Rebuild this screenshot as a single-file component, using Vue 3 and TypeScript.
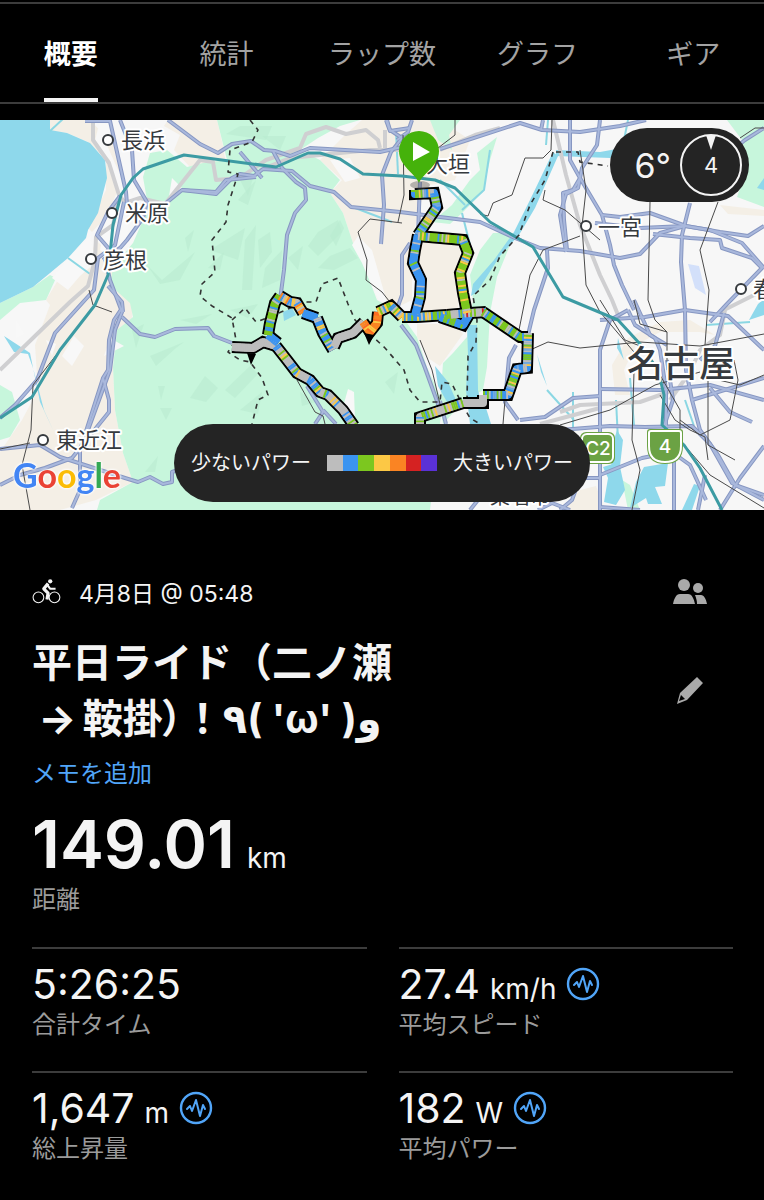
<script setup lang="ts">
import { ref } from 'vue'

type Pt = [number, number]
interface RouteSection {
  points: string
  colors: string[]
}

const tabs = ['概要', '統計', 'ラップ数', 'グラフ', 'ギア']
const activeTab = ref(0)

const GRAY = '#bdbdbd'
const BLUE = '#3b94f0'
const GREEN = '#7cc71f'
const YELLOW = '#fcc845'
const ORANGE = '#fa8423'
const RED = '#d52222'
const PURPLE = '#5a31d6'
const scale = [GRAY, BLUE, GREEN, YELLOW, ORANGE, RED, PURPLE]

const stats = [
  { value: '5:26:25', unit: '', label: '合計タイム', graph: false },
  { value: '27.4', unit: 'km/h', label: '平均スピード', graph: true },
  { value: '1,647', unit: 'm', label: '総上昇量', graph: true },
  { value: '182', unit: 'W', label: '平均パワー', graph: true },
]

const green = [
  '143,177 150,153 167,150 187,167 203,163 227,160 217,120 360,120 340,126 318,138 300,150 320,160 340,180 330,193 343,213 353,243 363,263 377,300 400,313 417,337 427,367 443,403 440,423 430,510 97,510 100,500 133,482 123,453 115,410 113,367 117,330 133,317 130,303 110,285 113,267 133,243 143,220 147,200',
  '0,303 33,287 50,275 56,278 46,300 20,303 0,320',
  '0,385 12,392 20,420 10,437 0,440',
  '430,120 438,140 452,150 449,135 460,120',
  '477,153 497,137 490,160 483,192 462,213 450,224 432,222 452,205 470,180 480,170',
  '493,233 515,233 508,250 497,277 490,313 487,367 483,390 463,402 443,424 440,405 443,363 453,353 467,337 473,300 470,275 480,250',
  '727,120 764,120 764,207 737,197 748,165 742,140',
  '622,480 628,510 640,510 630,485',
]
const beige = [
  '50,120 90,120 118,150 120,190 108,215 92,232 88,228 106,190 106,160 88,142 67,133 50,131',
  '96,240 118,262 110,285 133,305 132,318 116,332 113,367 115,410 123,453 133,482 96,500 60,510 0,510 0,452 22,420 38,390 35,345 50,305 46,300 58,280 88,262',
  '168,120 216,120 226,162 190,167 174,150 180,135 164,126',
  '200,120 217,120 224,150 200,160',
  '362,120 440,120 470,140 455,180 430,185 420,205 412,240 412,300 392,310 378,300 363,263 353,243 343,213 330,193 342,180 320,160 345,135',
  '422,240 460,245 462,270 458,308 424,312 415,280',
  '417,324 455,324 463,334 450,352 440,366 428,358 417,337',
  '615,395 612,365 628,338 660,322 690,320 715,335 700,332 660,332 636,345 624,370 630,395',
  '580,490 596,486 605,510 560,510',
  '720,205 764,210 764,216 728,214',
]
const pale = [
  '100,120 112,122 106,143 118,170 132,196 127,240 115,262 100,250 107,215 118,190 110,160 94,145',
  '68,258 90,236 96,262 80,276 68,290 52,278',
  '172,178 182,188 168,202', '74,336 84,346 72,366 62,356', '110,338 124,346 104,356', '16,320 24,334 16,338', '46,340 56,344 52,356',
  '352,245 362,263 378,300 388,306 372,250 358,236', '330,160 350,158 360,178 345,182',
  '348,389 354,392 355,420 341,414', '345,405 352,390 352,410',
]
const water = [
  '0,120 50,120 50,130 67,133 90,143 105,160 107,178 102,197 98,213 88,230 86,238 68,258 50,273 33,287 0,303',
  '4,336 24,349 30,353 40,402 54,432 44,410 33,368 28,354 14,352',
  '553,152 558,156 535,208 519,235 500,256 477,292 471,296 473,284 494,260 514,232 530,200',
  '467,325 477,325 478,390 486,424 470,424 466,390 468,355',
  '435,366 448,382 456,400 447,402 438,386', '476,396 486,408 491,424 480,424',
  '603,467 619,462 625,490 616,505 604,502 608,478', '617,430 623,440 620,466 612,480 611,450',
  '644,467 668,463 665,486 655,487 662,504 648,504 646,498 630,508 636,482', '694,484 700,486 692,510 682,510',
  '749,320 758,304 764,299 764,315', '618,338 624,360 617,348', '556,150 600,152 622,148 610,158 556,156',
  '757,188 764,178 764,190', '537,354 547,386 541,372', '283,312 292,308 296,315 284,321',
]
const shades = [
  '210,250 245,228 238,260', '245,240 256,225 252,290 242,290', '224,252 208,268 220,270', '238,200 256,180 248,205',
  '147,265 162,280 195,252 180,280 160,284', '185,238 194,230 188,252', '205,376 218,388 206,402 190,398', '158,386 165,386 161,400',
  '160,408 172,408 166,420', '145,472 158,456 155,472', '258,240 270,232 272,252 260,268', '265,268 282,250 280,280 262,288',
  '288,258 303,246 298,270', '308,246 318,232 338,220 342,232 318,256', '330,236 340,220 344,228 336,246', '318,268 330,256 350,248 358,258 334,270',
  '262,136 286,136 280,150', '226,134 240,126 272,126 266,140', '240,180 254,174 248,196', '230,310 258,304 248,318', '180,320 212,314 196,324',
  '132,330 144,324 136,348', '225,390 250,366 258,374 235,398', '240,410 262,392 258,414', '385,382 398,372 394,394',
  '150,356 184,342 176,348 156,366', '300,392 316,402 302,406',
]

const roads = [
  '85,121 110,121 126,192 127,205', '120,120 132,150 134,180 147,202 143,218 127,240 120,248 103,260',
  '120,196 108,212 97,235 110,250', '124,202 115,245 98,258 94,290 55,333 37,380 15,405 0,418',
  '105,258 110,280 122,312 115,330 110,370 88,430', '122,308 114,320 109,340 108,370 103,378 109,400 109,412 88,438 72,458 45,468 20,475 0,485',
  '108,286 122,302 123,312', '103,378 80,450 80,490 72,508',
  '122,317 140,334 155,337 175,329 208,328 214,336 232,343', '0,449 40,445 60,457 125,478 138,482 150,477 163,484 172,482 172,472 178,470',
  '168,120 200,144 218,153 232,144 251,141 264,150 275,151 290,156 310,148 380,152 402,147',
  '165,204 182,190 216,194 232,178 240,174 254,176 263,169 292,171 310,186 334,192 351,207 400,212 480,222 515,238 540,248 580,251 620,258 640,254 660,233 685,226 710,230 742,243 764,268',
  '182,190 216,192 226,180 256,177', '273,151 282,168 296,182 305,188 306,200 295,213 287,235 284,270 280,300',
  '387,120 390,130 402,138 391,152 382,175 384,205 381,244', '412,120 408,132 397,140',
  '420,182 418,235', '386,120 390,131 410,128', '440,149 520,123 542,130 580,132 620,126 646,120', '543,120 541,130',
  '570,120 570,160 580,178 573,190 563,193 564,220 567,250', '600,120 597,145 582,168 578,188 566,194 560,215 566,252',
  '580,178 602,215 610,245 614,265 622,285 634,310', '602,215 620,217 650,213 686,226 720,232 748,236 764,226',
  '595,223 640,228 685,226', '690,203 682,235 681,262 685,310 686,370 692,400 700,430 718,455 735,485 764,495',
  '653,234 690,238 720,240 722,248 752,258 762,268 726,305 710,322', '547,250 548,268 534,310 528,335',
  '410,243 402,255 402,295 398,306', '401,325 416,345 425,368 442,415', '516,345 509,358 505,402 518,420',
  '520,420 545,417 573,398 600,396', '628,310 610,320 600,350 600,510', '628,310 635,325 655,338 660,350 666,390 666,430',
  '600,320 645,317 685,310 728,316 764,350', '600,389 660,390 710,385 764,400', '560,430 610,426 645,427 692,426 710,444 732,483 764,500',
  '600,475 642,458 672,452 690,465 706,500', '634,300 650,335 667,345', '667,360 673,400 664,426', '724,313 715,346 700,360',
  '710,388 730,412 752,422', '764,446 740,478 720,510', '674,455 674,510', '705,475 698,510', '600,478 580,478 572,500 560,510',
  '538,510 552,503 570,510', '240,152 262,178', '307,386 323,412 315,424', '323,410 336,424', '440,401 446,424', '486,490 470,510', '600,507 640,510',
  '764,128 745,140 720,160', '692,400 764,378',
]
const grayRoads = [
  '93,120 93,140 109,163 119,195 125,203 140,198 165,204 200,160 213,162 216,180 240,178 266,160 300,148 306,134 326,127 346,134 366,130 378,140 380,148',
  '119,198 113,225 96,237 95,260 88,286 70,302 0,370', '385,130 385,150', '410,150 370,150 290,158 260,170', '440,150 475,135 500,128',
  '553,120 566,175 580,225 600,275 612,300 620,320', '560,412 580,405 640,402 680,388', '725,310 720,335 700,350 690,372 670,400', '764,290 720,312', '540,424 600,408',
]
const tealRoads = [
  '0,418 32,397 60,350 95,305 108,275 113,225 121,195 133,178 143,169 184,155 276,167 308,153 320,153 340,159 363,174 402,176 435,180 455,188 490,222 533,247 563,297 618,320 640,344 658,370 664,395 662,425 684,445 700,468 722,510',
]
const rails = [
  '89,290 93,305 112,312', '60,350 33,385 31,430 22,465 30,510', '0,449 30,443', '402,223 370,219 358,232 367,260 366,280 382,292 393,306',
  '455,120 455,135 438,148', '403,135 404,195 398,222', '552,120 551,150 543,158 525,158 512,195 493,203 488,216 480,214',
  '545,190 543,200 565,210 600,240', '580,236 543,250 530,275 517,340 530,350 548,342 580,348 640,342 700,346 764,334',
  '580,150 586,190 582,226 586,285 600,312 634,352', '650,202 648,300 655,320 667,332 667,370', '718,202 700,250 709,290 705,345',
  '740,138 755,128 764,128', '600,300 625,340 650,350', '560,425 610,410 655,385 700,372', '660,375 680,410 680,440 710,475 764,508',
  '708,370 708,445 735,460', '634,372 632,440 640,470 632,510', '710,378 740,385 764,375', '660,395 675,420 690,430 705,437 708,460', '680,420 700,435 730,420 738,380 734,360',
  '667,332 640,324 634,300', '505,400 503,424', '420,340 432,370 440,404', '297,380 315,412 323,416 325,424',
]
const borders = [
  '250,120 258,130 252,142 230,150 228,172 238,174 228,205 226,222 212,240 215,272 202,284 200,296 212,306 232,318 236,340 228,352 240,360 250,362 262,378 268,395 258,400 252,424',
  '232,320 245,308 256,322 272,316 304,302 316,302 322,284 338,278 348,304 355,320 370,334 385,348 404,370 410,390 420,402 440,402 442,382 452,384 462,404 470,418 480,424',
  '553,152 545,180 530,205 519,235 500,256 490,280 473,296 477,320 476,342 468,356 467,400', '556,152 578,152 580,162 608,166',
]
const streams = ['50,131 64,118', '68,258 90,274', '350,206 392,222', '396,132 398,174', '465,205 440,180', '462,213 470,245', '490,150 484,190 462,210', '628,120 622,150', '547,390 574,420', '573,392 573,430', '706,325 750,322', '630,378 634,425', '616,400 618,440', '548,120 546,145', '685,400 694,426']

const towns = [
  { name: '長浜', x: 121, y: 148, cx: 108, cy: 140 },
  { name: '米原', x: 125, y: 221, cx: 112, cy: 213 },
  { name: '彦根', x: 103, y: 268, cx: 91, cy: 259 },
  { name: '東近江', x: 56, y: 448, cx: 43, cy: 440 },
  { name: '一宮', x: 598, y: 235, cx: 586, cy: 226 },
  { name: '春', x: 753, y: 297, cx: 741, cy: 289 },
]

const mixed = [BLUE, GRAY, GREEN, BLUE, GREEN, GRAY, '#75a9dc', YELLOW]
const route: RouteSection[] = [
  { points: '232,347 253,348 263,342 276,346', colors: [GRAY] },
  { points: '276,346 287,360 297,373 310,380 320,392 328,395 343,410 354,426', colors: [GRAY, BLUE, GRAY, GREEN, BLUE, GRAY, YELLOW] },
  { points: '278,343 268,335', colors: [BLUE] },
  { points: '268,335 270,323 275,303 280,296', colors: [GREEN, GREEN, BLUE, GRAY] },
  { points: '280,296 290,302 297,303 303,313', colors: [GRAY, YELLOW, ORANGE, BLUE] },
  { points: '303,313 317,318', colors: [BLUE] },
  { points: '317,318 323,333 333,350', colors: [BLUE, GREEN, YELLOW, BLUE, GRAY] },
  { points: '334,347 338,338 353,333 364,322', colors: [GRAY] },
  { points: '363,322 370,332 377,323 378,312', colors: [ORANGE, ORANGE, '#ff6a22', YELLOW] },
  { points: '378,312 391,306 402,317', colors: [YELLOW, GREEN, GRAY, BLUE] },
  { points: '402,317 417,317 447,315', colors: [GREEN, YELLOW, BLUE, GRAY, BLUE] },
  { points: '440,317 463,325 470,313', colors: [BLUE, BLUE, GREEN] },
  { points: '447,315 470,313 486,312', colors: [GRAY, GRAY, RED, BLUE, GREEN] },
  { points: '415,190 415,194 434,193 437,207 418,235', colors: mixed },
  { points: '418,235 415,250 413,263 421,280 420,297 415,316', colors: [BLUE, BLUE, BLUE, BLUE, GREEN, BLUE, BLUE, GRAY] },
  { points: '418,236 463,240 468,253 460,273 463,293 467,313', colors: [GREEN, GREEN, BLUE, GREEN, GRAY, GREEN, YELLOW] },
  { points: '483,312 520,337 528,337', colors: [GREEN, GREEN, BLUE, GRAY] },
  { points: '528,333 527,368 517,369 508,395 483,395', colors: mixed },
  { points: '483,395 483,403 463,403', colors: [GRAY] },
  { points: '463,403 420,417 420,426', colors: [GRAY, GREEN, GRAY, YELLOW, GRAY, BLUE] },
]

function parse(points: string): Pt[] {
  return points.split(' ').map((p) => p.split(',').map(Number) as Pt)
}

interface Slice { x1: number; y1: number; x2: number; y2: number; color: string }
const slices: Slice[] = []
let seed = 7
for (const section of route) {
  const pts = parse(section.points)
  for (let i = 1; i < pts.length; i++) {
    const [ax, ay] = pts[i - 1]
    const [bx, by] = pts[i]
    const n = Math.max(1, Math.round(Math.hypot(bx - ax, by - ay) / 2))
    for (let k = 0; k < n; k++) {
      seed = (seed * 1103 + 12345) % 65536
      slices.push({
        x1: ax + ((bx - ax) * k) / n,
        y1: ay + ((by - ay) * k) / n,
        x2: ax + ((bx - ax) * (k + 1)) / n,
        y2: ay + ((by - ay) * (k + 1)) / n,
        color: section.colors[Math.floor(seed / 64) % section.colors.length],
      })
    }
  }
}
</script>

<template>
  <main class="app">
    <nav class="tabs">
      <button
        v-for="(tab, i) in tabs"
        :key="tab"
        type="button"
        class="tab"
        :class="{ active: i === activeTab }"
        @click="activeTab = i"
      >
        <span>{{ tab }}</span>
      </button>
    </nav>

    <section class="map">
      <svg class="canvas" viewBox="0 120 764 390" preserveAspectRatio="xMidYMid slice">
        <rect x="0" y="120" width="764" height="390" fill="#f7f7f7" />
        <polygon v-for="p in beige" :key="p" :points="p" fill="#f4efe6" />
        <polygon v-for="p in green" :key="p" :points="p" fill="#c7f6dc" />
        <polygon v-for="p in shades" :key="p" :points="p" fill="#b9ebd0" opacity="0.6" />
        <polygon v-for="p in pale" :key="p" :points="p" fill="#f8f8f8" />
        <polygon v-for="p in water" :key="p" :points="p" fill="#8ed8eb" />
        <polygon points="688,264 699,266 706,295 695,288" fill="#d3e0fa" />
        <g class="lines">
          <polyline v-for="p in streams" :key="p" :points="p" stroke="#8bd7e3" stroke-width="2" />
          <polyline v-for="p in grayRoads" :key="p" :points="p" stroke="#cfcfd1" stroke-width="4" />
          <polyline v-for="p in roads" :key="p" :points="p" stroke="#8797c2" stroke-width="4" />
          <polyline v-for="p in roads" :key="p" :points="p" stroke="#a9b8dc" stroke-width="2" />
          <polyline v-for="p in rails" :key="p" :points="p" stroke="#4a4a4a" stroke-width="1" />
          <polyline v-for="p in tealRoads" :key="p" :points="p" stroke="#3c9ba3" stroke-width="3" />
          <polyline v-for="p in borders" :key="p" :points="p" class="border" />
        </g>

        <g class="shields">
          <rect x="580" y="432" width="35" height="32" rx="6" fill="#6ba244" />
          <rect x="582" y="434" width="31" height="28" rx="5" fill="none" stroke="#fff" stroke-width="2" />
          <text x="598" y="455">C2</text>
          <path d="M650 429h30q3 0 3 3v14q0 18-18 18t-18-18v-14q0-3 3-3z" fill="#6ba244" />
          <path d="M651 431h28q2 0 2 2v13q0 16-16 16t-16-16v-13q0-2 2-2z" fill="none" stroke="#fff" stroke-width="2" />
          <text x="665" y="453">4</text>
        </g>

        <g class="lines">
          <polyline v-for="s in route" :key="s.points" :points="s.points" stroke="#000" stroke-width="12" stroke-linejoin="miter" />
        </g>
        <g class="lines">
          <polyline v-for="s in route" :key="s.points" :points="s.points" :stroke="s.colors[0]" stroke-width="8" />
          <line v-for="(s, i) in slices" :key="i" :x1="s.x1" :y1="s.y1" :x2="s.x2" :y2="s.y2" :stroke="s.color" stroke-width="8" />
        </g>
        <path d="M247 353l9 1-5 11zM364 333l10 2-5 10z" fill="#000" />

        <g class="towns">
          <template v-for="t in towns" :key="t.name">
            <circle :cx="t.cx" :cy="t.cy" r="5" />
            <text :x="t.x" :y="t.y">{{ t.name }}</text>
          </template>
          <text x="426" y="172">大垣</text>
          <text x="627" y="377" class="city">名古屋</text>
          <text x="490" y="504" class="small">桑名市</text>
        </g>

        <ellipse cx="420" cy="185" rx="10" ry="4" fill="#555" opacity="0.4" />
        <path d="M419 183C415 173 399 166 399 151a20 20 0 0 1 40 0c0 15-16 22-20 32z" fill="#45b20b" />
        <path d="M413 142l17 10-17 9z" fill="#fff" />

        <text x="13" y="488" class="google"><tspan fill="#4285f4">G</tspan><tspan fill="#ea4335">o</tspan><tspan fill="#fbbc05">o</tspan><tspan fill="#4285f4">g</tspan><tspan fill="#34a853">l</tspan><tspan fill="#ea4335">e</tspan></text>
      </svg>

      <div class="weather">
        <span>6°</span>
        <svg width="62" height="62" viewBox="0 0 62 62">
          <circle cx="31" cy="31" r="30" fill="none" stroke="#f4f4f4" stroke-width="2" />
          <path d="M26 1h10l-5 15z" fill="#f4f4f4" />
          <text x="31" y="39" text-anchor="middle" fill="#f4f4f4" font-size="22">4</text>
        </svg>
      </div>

      <div class="legend">
        <span>少ないパワー</span>
        <svg class="scale" viewBox="0 0 7 1" preserveAspectRatio="none">
          <rect v-for="(c, i) in scale" :key="c" :x="i" y="0" width="1" height="1" :fill="c" shape-rendering="crispEdges" />
        </svg>
        <span>大きいパワー</span>
      </div>
    </section>

    <section class="details">
      <header class="meta">
        <svg class="bike" viewBox="0 0 28 26">
          <g fill="none" stroke="#f4f4f4">
            <circle cx="6" cy="18" r="5" stroke-width="1" />
            <circle cx="21" cy="18" r="5" stroke-width="1" />
            <path d="M15 5l-4 5 4 4-1 6" stroke-width="3" stroke-linejoin="round" />
            <path d="M14 6l3 4h5" stroke-width="2" />
          </g>
          <circle cx="17" cy="3" r="2" fill="#f4f4f4" />
        </svg>
        <time>4月8日 @ 05:48</time>
        <button type="button" class="icon" aria-label="共有範囲">
          <svg width="34" height="26" viewBox="0 0 34 26" fill="#aaa">
            <circle cx="11" cy="6" r="6" />
            <circle cx="25" cy="9" r="5" />
            <path d="M0 25c1-5 3-10 7-10h8c4 0 6 5 7 10zM22 16h6c3 0 5 4 6 9H24c0-4-1-6-2-9z" />
          </svg>
        </button>
      </header>

      <div class="heading">
        <h1>平日ライド（二ノ瀬<br />&thinsp;→&thinsp;鞍掛<span class="tight">）</span>！٩( 'ω' )و</h1>
        <button type="button" class="icon" aria-label="編集">
          <svg width="34" height="28" viewBox="0 0 34 28" fill="#aaa">
            <path fill-rule="evenodd" d="M24 0l6 6-16 17-10 4 3-11zM8 18l-2 6 6-2z" />
          </svg>
        </button>
      </div>

      <a class="memo" href="#memo">メモを追加</a>

      <div class="distance">
        <p class="value"><strong>149.01</strong><span class="unit">km</span></p>
        <p class="label">距離</p>
      </div>

      <div class="stats">
        <div v-for="s in stats" :key="s.label" class="stat">
          <p class="value">
            <span class="number">{{ s.value }}</span>
            <span v-if="s.unit" class="unit">{{ s.unit }}</span>
            <button v-if="s.graph" type="button" class="graph" :aria-label="s.label + 'のグラフ'">
              <svg width="34" height="34" viewBox="0 0 34 34" fill="none" stroke="#51a5f8" stroke-linejoin="round" stroke-linecap="round">
                <circle cx="17" cy="17" r="15" stroke-width="2.4" />
                <path d="M8 18l3-3 2 5 4-11 4 16 3-11 2 4" stroke-width="2" />
              </svg>
            </button>
          </p>
          <p class="label">{{ s.label }}</p>
        </div>
      </div>
    </section>
  </main>
</template>

<style>
body {
  margin: 0;
  background: #000;
}
</style>

<style scoped>
.app {
  min-height: 100vh;
  box-sizing: border-box;
  padding-top: 2px;
  overflow: hidden;
  background: #000;
  color: #f4f4f4;
  font-family: Inter, "Noto Sans CJK JP", sans-serif;
}
button {
  margin: 0;
  padding: 0;
  border: 0;
  background: none;
  color: inherit;
  font: inherit;
  cursor: pointer;
}
p,
h1 {
  margin: 0;
}
.tabs {
  display: grid;
  grid-template-columns: repeat(5, 1fr);
  margin: 0 -7px;
  border-top: 2px solid #3c3c3c;
  border-bottom: 2px solid #3c3c3c;
}
.tab {
  display: flex;
  justify-content: center;
  height: 98px;
  color: #a3a3a3;
  font-size: 27px;
}
.tab span {
  height: 94px;
  line-height: 101px;
}
.tab.active {
  color: #fff;
  font-weight: 700;
}
.tab.active span {
  border-bottom: 4px solid #f4f4f4;
}
.map {
  position: relative;
  height: 390px;
  margin-top: 16px;
  overflow: hidden;
}
.canvas {
  display: block;
  width: 100%;
  height: 100%;
}
.lines {
  fill: none;
  stroke-linejoin: round;
}
.border {
  stroke: #333;
  stroke-width: 1.6;
  stroke-dasharray: 5 5;
}
.shields text {
  fill: #fff;
  font-size: 19px;
  font-weight: 500;
  text-anchor: middle;
}
.towns text {
  fill: #363a3e;
  stroke: #fff;
  stroke-width: 4px;
  stroke-linejoin: round;
  paint-order: stroke;
  font-family: "Noto Sans CJK JP", sans-serif;
  font-size: 22px;
}
.towns .city {
  font-size: 36px;
  font-weight: 500;
}
.towns .small {
  font-size: 20px;
}
.towns circle {
  fill: #fff;
  stroke: #363a3e;
  stroke-width: 2px;
}
.google {
  font-family: Lato, sans-serif;
  font-size: 34px;
  font-weight: 700;
  filter: drop-shadow(0 0 1px #fff) drop-shadow(0 0 1px #fff);
}
.weather {
  position: absolute;
  top: 8px;
  right: 15px;
  display: flex;
  align-items: center;
  justify-content: flex-end;
  gap: 9px;
  width: 139px;
  height: 74px;
  box-sizing: border-box;
  padding-right: 7px;
  border-radius: 37px;
  background: #242424;
  font-size: 34px;
}
.legend {
  position: absolute;
  bottom: 8px;
  left: 50%;
  display: flex;
  align-items: center;
  justify-content: center;
  gap: 16px;
  width: 416px;
  height: 78px;
  border-radius: 39px;
  background: #242424;
  font-size: 20px;
  line-height: 24px;
  white-space: nowrap;
  transform: translateX(-50%);
}
.scale {
  width: 110px;
  height: 16px;
}
.details {
  padding: 65px 31px 0 32px;
}
.meta {
  display: flex;
  align-items: center;
  height: 34px;
  font-size: 23px;
}
.bike {
  width: 30px;
  height: 28px;
  margin-right: 17px;
}
.icon {
  display: flex;
  margin-left: auto;
  margin-right: 26px;
}
.heading {
  display: flex;
  align-items: center;
  margin-top: 26px;
}
h1 {
  font-family: Inter, "Noto Sans CJK JP", "DejaVu Sans", sans-serif;
  font-size: 40px;
  font-weight: 700;
  line-height: 56px;
}
.tight {
  font-feature-settings: "palt";
}
.memo {
  display: block;
  width: max-content;
  margin-top: 9px;
  color: #51a5f8;
  font-size: 24px;
  line-height: 36px;
  text-decoration: none;
}
.value {
  display: flex;
  align-items: baseline;
}
.distance .value {
  height: 72px;
  margin-top: 16px;
  margin-bottom: 2px;
  line-height: 72px;
}
strong {
  font-size: 66px;
  font-weight: 600;
}
.unit {
  margin-left: 10px;
  font-size: 28px;
}
.distance .unit {
  margin-left: 12px;
}
.label {
  color: #9b9b9b;
  font-size: 24px;
  line-height: 36px;
}
.stats {
  display: grid;
  grid-template-columns: 1fr 1fr;
  column-gap: 32px;
  margin-top: 29px;
}
.stat {
  height: 122px;
  border-top: 2px solid #3c3c3c;
}
.stat .value {
  height: 44px;
  margin-top: 13px;
  margin-bottom: 1px;
  line-height: 44px;
}
.number {
  font-size: 41px;
}
.graph {
  display: flex;
  align-self: center;
  margin-left: 10px;
}
</style>
